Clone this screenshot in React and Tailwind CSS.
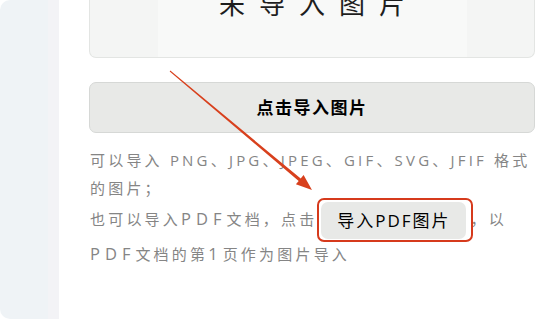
import React from "react";

const font = { fontFamily: '"Open Sans", "Noto Sans CJK SC", sans-serif' };

const Arrow = () => (
  <svg className="absolute left-0 top-0 pointer-events-none" width="555" height="319" viewBox="0 0 555 319">
    <polygon
      points="169.7,71.4 298.7,180.9 295.9,184.3 312,190 303.6,175.1 300.7,178.6 170.3,70.6"
      fill="#d8401d"
    />
  </svg>
);

// latin runs render wider in the original font
const Wide = ({ children }) => <span className="text-[16.5px] tracking-[5px]">{children}</span>;

export default function App() {
  return (
    <div className="relative flex h-[319px] w-[555px] overflow-hidden bg-white" style={font}>
      {/* side panel */}
      <div className="w-[48px] shrink-0 rounded-l-[10px] bg-[#eff3f6]" />
      <div className="w-[11px] shrink-0 bg-[#f3f3f6]" />

      <div className="flex-1 pl-[30px] pr-[20px]">
        {/* preview box */}
        <div className="flex h-[58px] justify-center rounded-b-[7px] border-x border-b border-[#e3e5e3] bg-[#f4f5f4]">
          <div className="flex h-full w-[309px] justify-center bg-[#f8f9f8]">
            <div className="-mt-[9px] pl-[14px] text-[26px] leading-none tracking-[14px] text-[#1e1e1e]">
              未导入图片
            </div>
          </div>
        </div>

        {/* import button */}
        <button
          type="button"
          className="mt-[24px] flex h-[51px] w-full items-center justify-center rounded-[7px] border border-[#d6d8d6] bg-[#e8e9e7] text-[17px] font-bold tracking-[1.5px] text-black"
        >
          点击导入图片
        </button>

        {/* hint */}
        <div className="mt-[13px] pl-[1px] text-[15px] leading-[28px] tracking-[3.2px] text-[#858585]">
          <p>可以导入 PNG、JPG、JPEG、GIF、SVG、JFIF 格式的图片；</p>
          <p className="leading-[30px]">
            也可以导入<Wide>PDF</Wide>文档，点击
            <span className="relative ml-[4px] mr-[4px] inline-block align-middle">
              <span className="inline-flex h-[37px] w-[145px] items-center justify-center rounded-[7px] bg-[#e8e9e7] text-[17px] tracking-[2px] text-black">
                导入PDF图片
              </span>
              <span className="absolute -bottom-[3px] -left-[4px] -right-[7px] -top-[4px] rounded-[7px] border-2 border-[#d63a1c]" />
            </span>
            ，以<Wide>PDF</Wide>文档的第<Wide>1</Wide>页作为图片导入
          </p>
        </div>
      </div>

      <Arrow />
    </div>
  );
}
